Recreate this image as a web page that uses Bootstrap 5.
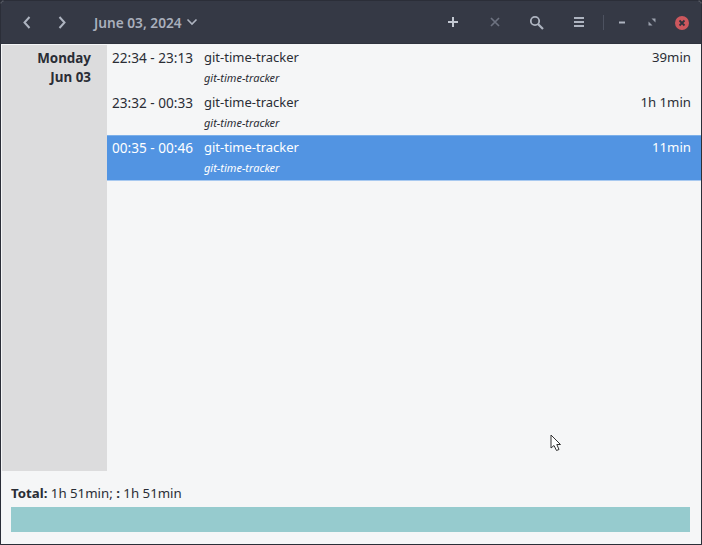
<!DOCTYPE html>
<html lang="en">
<head>
<meta charset="utf-8">
<title>git-time-tracker</title>
<link href="https://cdn.jsdelivr.net/npm/bootstrap@5.3.0/dist/css/bootstrap.min.css" rel="stylesheet">
<style>
html,body{height:100%;margin:0;background:#2b2e38}
body{font-family:"Noto Sans",sans-serif;font-size:13.4px;line-height:19px;color:#2e3440;overflow:hidden}
.win{width:702px;height:545px;background:#f5f6f7;border:1px solid #2b2e38;border-radius:4px 4px 0 0;overflow:hidden}
.hdr{height:43px;background:#353945;color:#aeb4c0;flex:none;border-bottom:1px solid #2f333e;position:relative}
.ico{position:absolute;display:block}
.datelbl{position:absolute;left:93px;top:12px;font-weight:600;font-size:13.7px;color:#a9afbc;white-space:nowrap}
.sep{position:absolute;left:602px;top:14px;width:1px;height:15px;background:#4d5260}
.main{height:427px;flex:none}
.side{width:105px;flex:none;background:#dcdcdd;margin-top:1px;margin-left:1px;text-align:right;padding:4px 16px 0 0;font-weight:700;line-height:19px;color:#2a2d35}
.entries{flex:1 1 auto;min-width:0;padding-top:1px}
.ent{height:45px;padding:3px 10px 0 5px;display:flex;color:#2a2d35}
.ent .t1{width:92px;flex:none;white-space:nowrap;font-size:13.6px}
.ent .t2{flex:1 1 auto;min-width:0;font-size:13px}
.ent .t3{flex:none;font-size:13.2px}
.sub{font-style:italic;font-size:11px;line-height:14px;margin-top:4px}
.ent.sel{background:#5294e2;color:#fff;border-top:1px solid #7cb0ea;border-bottom:1px solid #a8c9f0;padding-top:2px;height:46px}
.foot{padding:13px 11px 0 10px}
.totline{height:19px;color:#2a2d35;font-size:13.25px}
.barx{height:25px;background:#96cbce;margin-top:4px}
.ptr{position:absolute;left:549px;top:433px}
</style>
</head>
<body>
<div class="win d-flex flex-column position-relative">
  <div class="hdr">
    <svg class="ico" style="left:20px;top:14px" width="12" height="15" viewBox="0 0 12 15"><path d="M8.5 2 L3.5 7.5 L8.5 13" fill="none" stroke="#aeb4c0" stroke-width="2"/></svg>
    <svg class="ico" style="left:55px;top:14px" width="12" height="15" viewBox="0 0 12 15"><path d="M3.5 2 L8.5 7.5 L3.5 13" fill="none" stroke="#aeb4c0" stroke-width="2"/></svg>
    <span class="datelbl">June 03, 2024</span>
    <svg class="ico" style="left:185px;top:16px" width="12" height="10" viewBox="0 0 12 10"><path d="M1.5 2.5 L6 7 L10.5 2.5" fill="none" stroke="#aeb4c0" stroke-width="1.6"/></svg>
    <svg class="ico" style="left:446px;top:15px" width="12" height="12" viewBox="0 0 12 12"><path d="M6 1 V11 M1 6 H11" fill="none" stroke="#c3c8d2" stroke-width="2"/></svg>
    <svg class="ico" style="left:488px;top:15px" width="12" height="12" viewBox="0 0 12 12"><path d="M2 2 L10 10 M10 2 L2 10" fill="none" stroke="#6d7280" stroke-width="1.7"/></svg>
    <svg class="ico" style="left:528px;top:14px" width="15" height="15" viewBox="0 0 15 15"><circle cx="6" cy="6" r="4.2" fill="none" stroke="#aeb4c0" stroke-width="1.8"/><path d="M9 9 L14 14" stroke="#aeb4c0" stroke-width="2.2"/></svg>
    <svg class="ico" style="left:572px;top:15px" width="12" height="12" viewBox="0 0 12 12"><path d="M1 2 H11 M1 6 H11 M1 10 H11" stroke="#aeb4c0" stroke-width="2"/></svg>
    <span class="sep"></span>
    <svg class="ico" style="left:617px;top:15px" width="12" height="12" viewBox="0 0 12 12"><path d="M1 6.5 H7" stroke="#aeb4c0" stroke-width="2"/></svg>
    <svg class="ico" style="left:645px;top:15px" width="12" height="12" viewBox="0 0 12 12"><path d="M5.5 2.5 H9.5 V6.5 Z M2.5 5.5 L6.5 9.5 H2.5 Z" fill="#9ba1ad"/></svg>
    <svg class="ico" style="left:673px;top:14px" width="16" height="16" viewBox="0 0 16 16"><circle cx="8" cy="8" r="7" fill="#cc575d"/><path d="M5.5 5.5 L10.5 10.5 M10.5 5.5 L5.5 10.5" stroke="#2f333e" stroke-width="1.8"/></svg>
  </div>
  <div class="main d-flex">
    <div class="side"><div>Monday</div><div>Jun 03</div></div>
    <div class="entries">
      <div class="ent"><div class="t1">22:34 - 23:13</div><div class="t2">git-time-tracker<div class="sub">git-time-tracker</div></div><div class="t3">39min</div></div>
      <div class="ent"><div class="t1">23:32 - 00:33</div><div class="t2">git-time-tracker<div class="sub">git-time-tracker</div></div><div class="t3">1h 1min</div></div>
      <div class="ent sel"><div class="t1">00:35 - 00:46</div><div class="t2">git-time-tracker<div class="sub">git-time-tracker</div></div><div class="t3">11min</div></div>
    </div>
  </div>
  <div class="foot">
    <div class="totline"><b>Total:</b> 1h 51min; <b>:</b> 1h 51min</div>
    <div class="barx"></div>
  </div>
  <svg class="ptr" width="12" height="18" viewBox="0 0 12 18"><path d="M1 1 V14 L4 11.5 L6.5 16.5 L9 15.5 L6.8 10.5 H10.5 Z" fill="#fff" stroke="#333" stroke-width="1"/></svg>
</div>
<script src="https://cdn.jsdelivr.net/npm/bootstrap@5.3.0/dist/js/bootstrap.bundle.min.js"></script>
</body>
</html>
